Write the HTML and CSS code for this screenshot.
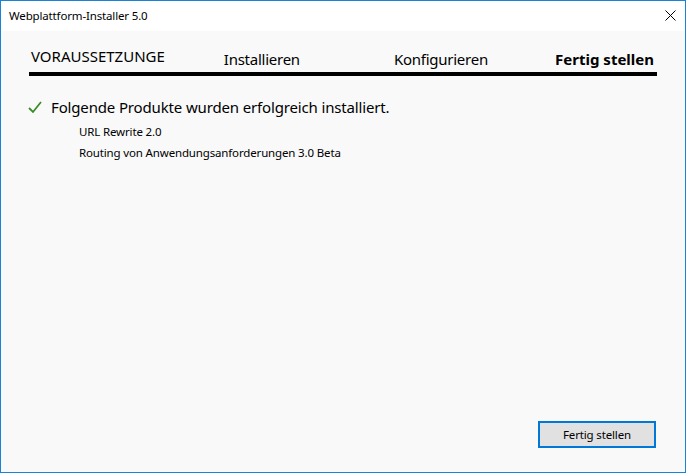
FILE: index.html
```html
<!DOCTYPE html>
<html>
<head>
<meta charset="UTF-8">
<title>Webplattform-Installer 5.0</title>
<link rel="stylesheet" href="styles.css">
</head>
<body>
<div class="window">
	<div class="titlebar">
		<span class="title">Webplattform-Installer 5.0</span>
		<svg class="close" width="11" height="11" viewBox="0 0 11 11">
			<path d="M0.5 0.5 L10.5 10.5 M10.5 0.5 L0.5 10.5" stroke="#000" stroke-width="1" fill="none"/>
		</svg>
	</div>
	<div class="content">
		<div class="steps">
			<div class="step first">VORAUSSETZUNGE</div>
			<div class="step second">Installieren</div>
			<div class="step third">Konfigurieren</div>
			<div class="step current">Fertig stellen</div>
		</div>
		<div class="result">
			<svg class="check" width="14" height="13" viewBox="0 0 14 13">
				<path d="M1 7 L5 11 L13 1" stroke="#3a8c26" stroke-width="1.8" fill="none"/>
			</svg>
			<span class="heading">Folgende Produkte wurden erfolgreich installiert.</span>
		</div>
		<ul class="products">
			<li>URL Rewrite 2.0</li>
			<li>Routing von Anwendungsanforderungen 3.0 Beta</li>
		</ul>
		<div class="footer">
			<button class="button">Fertig stellen</button>
		</div>
	</div>
</div>
</body>
</html>
```

FILE: styles.css
```css
html, body {
	margin: 0;
	padding: 0;
}

body {
	font-family: "Noto Sans", "Open Sans", sans-serif;
	color: #000;
	background: #fff;
}

.window {
	width: 686px;
	height: 473px;
	box-sizing: border-box;
	border: 1px solid #1883d7;
	display: flex;
	flex-direction: column;
}

.titlebar {
	height: 30px;
	background: #fff;
	display: flex;
	align-items: center;
	justify-content: space-between;
	padding: 0 9px 0 8px;
}

.title {
	font-size: 11.5px;
	letter-spacing: -0.15px;
	margin-top: -2px;
}

.close {
	margin-top: -2px;
}

.content {
	flex: 1;
	background: #f9f9f9;
	display: flex;
	flex-direction: column;
	padding: 0 28px;
}

.steps {
	display: flex;
	align-items: flex-end;
	border-bottom: 4px solid #000;
	font-size: 15px;
	line-height: 20px;
	padding: 0 3px 3px 2px;
	box-sizing: border-box;
	height: 45px;
}

.step.first {
	padding-bottom: 3px;
}

.step.second {
	margin-left: 59px;
	letter-spacing: -0.25px;
}

.step.third {
	margin-left: 94px;
	letter-spacing: -0.25px;
}

.step.current {
	margin-left: auto;
	font-weight: bold;
}

.result {
	display: flex;
	align-items: center;
	margin-top: 21px;
	margin-left: -1px;
}

.check {
	margin-right: 9px;
}

.heading {
	font-size: 15px;
	letter-spacing: -0.15px;
}

.products {
	list-style: none;
	margin: 4px 0 0 0;
	padding: 0 0 0 50px;
	font-size: 11.5px;
	letter-spacing: -0.15px;
	line-height: 21px;
}

.footer {
	margin-top: auto;
	display: flex;
	justify-content: flex-end;
	padding: 0 1px 24px 0;
}

.button {
	width: 118px;
	height: 27px;
	background: #e1e1e1;
	border: 2px solid #0078d7;
	font-family: "Noto Sans", "Open Sans", sans-serif;
	font-size: 11.5px;
	letter-spacing: -0.15px;
	color: #000;
	padding: 0;
}
```
